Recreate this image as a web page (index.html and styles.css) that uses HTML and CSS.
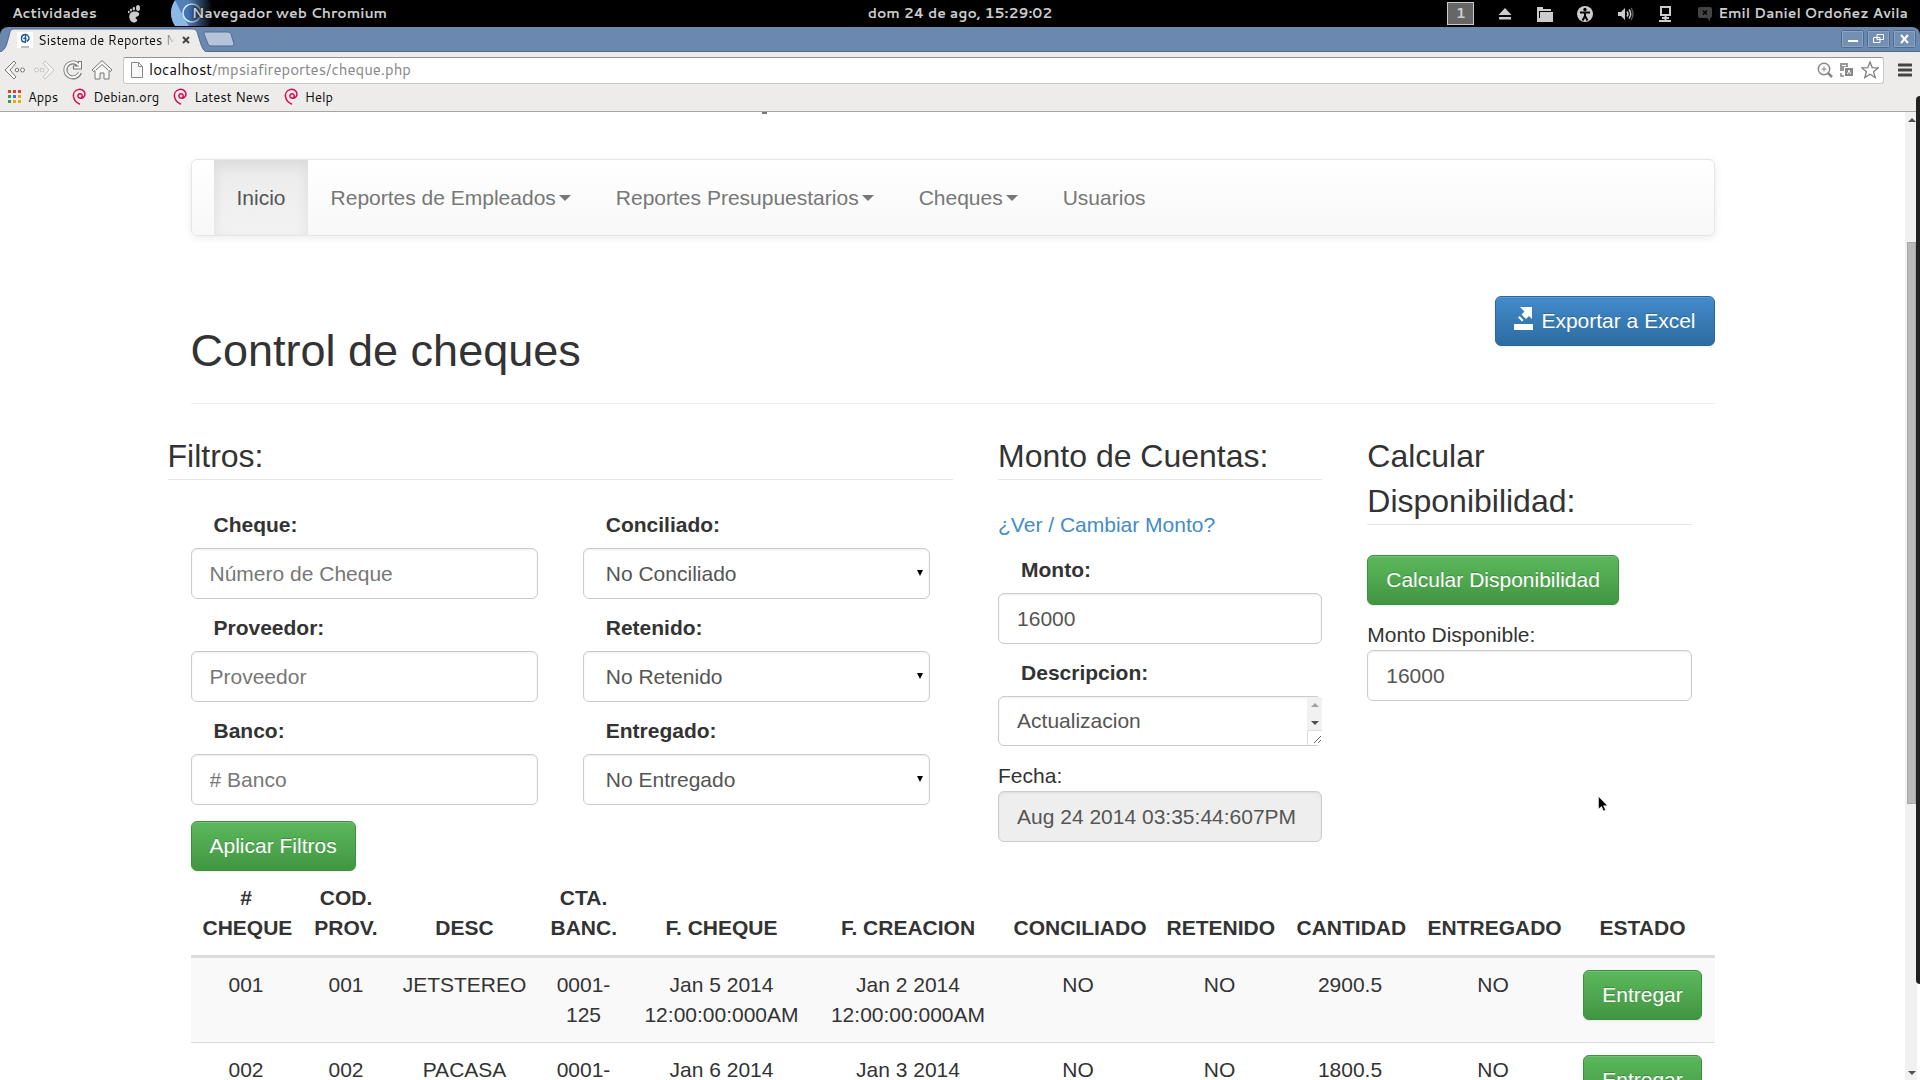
FILE: index.html
```html
<!DOCTYPE html>
<html lang="es">
<head>
<meta charset="utf-8">
<title>Sistema de Reportes</title>
<link rel="stylesheet" href="styles.css">
</head>
<body>
<svg class="defs" width="0" height="0" aria-hidden="true">
  <symbol id="debian" viewBox="0 0 16 18"><path d="M7.500 10.500C5.500 9.500 6 6.500 8.200 6c2.600-.4 3.600 2.600 1.900 4.300M8 10.600c3.500 1.200 6.200-1.600 5.800-4.900C13.300 2.300 9.500.7 6.200 1.700 2.500 2.800 1 6.300 1.700 9.700c.7 3.200 3 5.900 6.300 7.300" fill="none" stroke="#d70a53" stroke-width="1.600" stroke-linecap="round"/></symbol>
</svg>

<header class="shell">
  <div class="shell-left">
    <span>Actividades</span>
    <svg class="foot" width="14" height="18" viewBox="0 0 14 18" fill="#ccc"><path d="M6.500 6.500C10 6 13 7.500 12 10c-.6 1.500-3 1.500-3.500 3-.2 1 1.300.6 1.600 1.800C10.500 17 8 18 5.500 17.200 2 16 0 7.500 6.500 6.500z"/><ellipse cx="11" cy="3" rx="2" ry="2.900"/><ellipse cx="6.800" cy="3.700" rx="1.200" ry="1.900"/><ellipse cx="4" cy="5" rx="1" ry="1.600"/><ellipse cx="1.800" cy="7" rx=".9" ry="1.300"/></svg>
    <span class="app">
      <svg class="app-logo" width="42" height="26" viewBox="0 0 42 26"><defs><linearGradient id="fade"><stop offset=".4" stop-color="#fff"/><stop offset="1" stop-color="#000"/></linearGradient><mask id="m"><rect width="42" height="26" fill="url(#fade)"/></mask></defs><g mask="url(#m)"><circle cx="21" cy="13" r="21" fill="#4f80b8"/><path d="M4 0L14 20 18 26H4Q-4 13 4 0z" fill="#8cb8e6"/><circle cx="21" cy="13" r="9" fill="#3f73b5" stroke="#dce9f7" stroke-width="1.500"/></g></svg>
      <span>Navegador web Chromium</span>
    </span>
  </div>
  <time>dom 24 de ago, 15:29:02</time>
  <div class="shell-right">
    <span class="workspace">1</span>
    <svg width="40" height="20" viewBox="0 0 40 20" fill="#ccc"><path d="M20 4l6.500 7h-13zM14 13h12v2.500H14z"/></svg>
    <svg width="40" height="20" viewBox="0 0 40 20" fill="#ccc"><path d="M12 3h6v2h8v2H14v7h-2zM15 8h13v10H12v-4h3z"/></svg>
    <svg width="40" height="20" viewBox="0 0 40 20"><circle cx="20" cy="10" r="8" fill="#ccc"/><circle cx="20" cy="5.500" r="1.700"/><path d="M15 8.500h10M20 8v4l-2.500 4.500M20 12l2.500 4.500" fill="none" stroke="#000" stroke-width="2"/></svg>
    <svg width="40" height="20" viewBox="0 0 40 20" fill="none"><path d="M13 8h3l4-4v12l-4-4h-3z" fill="#ccc"/><path d="M22 7.500q2 2.500 0 5M24 5.500q3.500 4.500 0 9" stroke="#ccc" stroke-width="1.500"/><path d="M26 4q4 6 0 12" stroke="#555" stroke-width="1.500"/></svg>
    <svg width="40" height="20" viewBox="0 0 40 20" fill="none" stroke="#ccc" stroke-width="2"><path d="M16 3h9v8h-9zM20.500 11v6M14 17h12M17 14h7"/></svg>
    <svg class="chat" width="14" height="14" viewBox="0 0 14 14"><path d="M2 0h10q2 0 2 2v7q0 2-2 2v3l-3-3H2q-2 0-2-2V2q0-2 2-2z" fill="#444"/><path d="M5 3.500l4 4M9 3.500l-4 4" stroke="#000" stroke-width="1.500"/></svg>
    <span>Emil Daniel Ordoñez Avila</span>
  </div>
</header>

<div class="tabstrip">
  <div class="tab">
    <svg class="tab-shape" width="212" height="24" viewBox="0 0 212 24"><path d="M0 24C6 22 7 15 9 8 10 3 11 1 14 1H192c4 0 5 2 6 6 3 9 4 16 9 17z" fill="#edecea"/><path d="M0 24C6 22 7 15 9 8 10 3 11 1 14 1H192c4 0 5 2 6 6 3 9 4 16 9 17" fill="none" stroke="#4f6a8f"/></svg>
    <svg class="favicon" width="16" height="16" viewBox="0 0 16 16"><path fill="#fff" d="M0 0h16v16H0z"/><path d="M8.500 2v9M10 9.500q3-2.500 1.500-5Q10 2 7.500 2.500 4.500 3 4.500 6.500T7.500 10Q9 10 8.800 6.500 7 5.500 6.500 7" fill="none" stroke="#1f5a92" stroke-width="1.400"/><path d="M4 15h8" stroke="#bbb" stroke-width="2"/></svg>
    <span class="tab-title">Sistema de Reportes M</span>
    <svg class="tab-close" width="8" height="8" viewBox="0 0 8 8"><path d="M1 1l6 6M7 1L1 7" stroke="#444" stroke-width="2"/></svg>
  </div>
  <svg class="newtab" width="32" height="16" viewBox="0 0 32 16"><path d="M2 1h23q2 0 3 2l3 10q0 2-2 2H8q-2 0-3-2L1 3q0-2 1-2z" fill="#b5c4d8" stroke="#516d93"/></svg>
  <div class="winbtns">
    <svg width="23" height="18" viewBox="0 0 23 18"><rect x=".5" y=".5" width="22" height="17" rx="2" fill="#7390b4" stroke="#50698c"/><rect x="1.500" y="1.500" width="20" height="15" fill="none" stroke="#8ba3c2"/><path d="M7 11h10" stroke="#fff" stroke-width="2"/></svg>
    <svg width="23" height="18" viewBox="0 0 23 18"><rect x=".5" y=".5" width="22" height="17" rx="2" fill="#7390b4" stroke="#50698c"/><rect x="1.500" y="1.500" width="20" height="15" fill="none" stroke="#8ba3c2"/><path d="M10 4.500h6.500v5H10zM6.500 7.500h6.500v5H6.500z" fill="#7390b4" stroke="#fff"/></svg>
    <svg width="23" height="18" viewBox="0 0 23 18"><rect x=".5" y=".5" width="22" height="17" rx="2" fill="#7390b4" stroke="#50698c"/><rect x="1.500" y="1.500" width="20" height="15" fill="none" stroke="#8ba3c2"/><path d="M8 5l7 8M15 5l-7 8" stroke="#fff" stroke-width="2"/></svg>
  </div>
</div>

<div class="toolbar">
  <svg width="22" height="22" viewBox="0 0 22 22" fill="#f8f8f7" stroke="#777"><path d="M10 2l2 2-6 7 6 7-2 2-9-9z"/><circle cx="13" cy="11" r="1.800"/><circle cx="18.500" cy="11" r="2"/></svg>
  <svg width="22" height="22" viewBox="0 0 22 22" fill="#f4f4f3" stroke="#c4c4c2"><path d="M12 2l-2 2 6 7-6 7 2 2 9-9z"/><circle cx="9" cy="11" r="1.800"/><circle cx="3.500" cy="11" r="2"/></svg>
  <svg width="22" height="22" viewBox="0 0 22 22" fill="none"><path d="M17 6.500a7.500 7.500 0 1 0 1 7M18 2v6.500h-7" stroke="#777" stroke-width="4"/><path d="M17 6.500a7.500 7.500 0 1 0 1 6.500M18 3v5.500h-6" stroke="#f8f8f7" stroke-width="2"/></svg>
  <svg width="22" height="22" viewBox="0 0 22 22" fill="#f8f8f7" stroke="#777"><path d="M11 1.500L1 11l1.500 1.500L4 11.500V20h5v-6h4v6h5v-8.500l1.500 1L21 11z"/><path d="M5 11l6-5.500 6 5.500" fill="none"/></svg>
  <div class="urlbox">
    <svg width="12" height="16" viewBox="0 0 12 16"><path d="M.5.500h7l4 4v11H.5zM7.500.500v4h4" fill="#f7f7f7" stroke="#888"/></svg>
    <span class="url">localhost<span>/mpsiafireportes/cheque.php</span></span>
    <svg width="16" height="16" viewBox="0 0 16 16" fill="none" stroke="#888"><circle cx="7" cy="7" r="5.700" stroke-width="1.500"/><path d="M4.500 7h5M7 4.500v5"/><path d="M11 11l4 4" stroke-width="2.500"/></svg>
    <svg width="16" height="16" viewBox="0 0 16 16"><path d="M1 1h8v4H5v4H1z" fill="#999"/><path d="M6 6h8v8H6z" fill="#888"/><path d="M8.500 12L10 8l1.500 4M3 3.500h4" fill="none" stroke="#fff"/><path d="M2 11v3h3" fill="none" stroke="#888" stroke-width="1.500"/></svg>
    <svg width="18" height="18" viewBox="0 0 18 18"><path d="M9 1l2.200 5.600 6 .3-4.600 3.800 1.600 5.900L9 13.300l-5.200 3.300 1.600-5.900L.8 6.900l6-.3z" fill="#fff" stroke="#808080" stroke-width="1.300"/></svg>
  </div>
  <svg class="menu" width="14" height="14" viewBox="0 0 14 14"><path d="M1 2h12M1 7h12M1 12h12" stroke="#444" stroke-width="3" stroke-linecap="round"/></svg>
</div>

<nav class="bookmarks">
  <a href="#"><svg width="14" height="14" viewBox="0 0 14 14"><path d="M0 0h3v3H0zM5 0h3v3H5zM10 0h3v3h-3z" fill="#e53935"/><path d="M0 5h3v3H0zM0 10h3v3H0z" fill="#2e9e5b"/><path d="M5 5h3v3H5z" fill="#2f7de1"/><path d="M10 5h3v3h-3zM5 10h3v3H5zM10 10h3v3h-3z" fill="#f2a600"/></svg>Apps</a>
  <a href="#"><svg width="15" height="17"><use href="#debian"/></svg>Debian.org</a>
  <a href="#"><svg width="15" height="17"><use href="#debian"/></svg>Latest News</a>
  <a href="#"><svg width="15" height="17"><use href="#debian"/></svg>Help</a>
</nav>

<div class="viewport">
  <main class="page">
    <span class="banner-tail"></span>
    <div class="container">
      <nav class="navbar">
        <a class="active" href="#">Inicio</a>
        <a href="#">Reportes de Empleados<i class="caret"></i></a>
        <a href="#">Reportes Presupuestarios<i class="caret"></i></a>
        <a href="#">Cheques<i class="caret"></i></a>
        <a href="#">Usuarios</a>
      </nav>

      <div class="page-header">
        <h2>Control de cheques</h2>
        <button class="btn btn-primary" type="button"><svg width="21" height="24" viewBox="0 0 21 24" fill="#fff"><path d="M6 1h12v12l-3-3-3 3-4.500-4.500 3-3zM5.500 10l4 4-1.500 1.500-4-4zM0 18h19v6H0z"/></svg>Exportar a Excel</button>
      </div>

      <div class="panels">
        <section>
          <h3>Filtros:</h3>
          <form class="filters">
            <div class="field"><label for="cheque">Cheque:</label><input id="cheque" type="text" placeholder="Número de Cheque"></div>
            <div class="field"><label for="conciliado">Conciliado:</label><div class="select"><select id="conciliado"><option>No Conciliado</option></select></div></div>
            <div class="field"><label for="proveedor">Proveedor:</label><input id="proveedor" type="text" placeholder="Proveedor"></div>
            <div class="field"><label for="retenido">Retenido:</label><div class="select"><select id="retenido"><option>No Retenido</option></select></div></div>
            <div class="field"><label for="banco">Banco:</label><input id="banco" type="text" placeholder="# Banco"></div>
            <div class="field"><label for="entregado">Entregado:</label><div class="select"><select id="entregado"><option>No Entregado</option></select></div></div>
            <button class="btn btn-success" type="button">Aplicar Filtros</button>
          </form>
        </section>
        <section>
          <h3>Monto de Cuentas:</h3>
          <a class="link" href="#">¿Ver / Cambiar Monto?</a>
          <div class="stack">
            <div class="field"><label for="monto">Monto:</label><input id="monto" type="text" value="16000"></div>
            <div class="field"><label for="descripcion">Descripcion:</label>
              <div class="area"><textarea id="descripcion" rows="1">Actualizacion</textarea>
                <svg width="15" height="48" viewBox="0 0 15 48"><path fill="#f1f1f1" d="M0 0h15v33H0z"/><path fill="#fff" d="M0 33h15v15H0z"/><path d="M.5 48V33.500H15" fill="none" stroke="#ddd"/><path d="M4 10l4-4 4 4z" fill="#a3a3a3"/><path d="M4 24h8l-4 4z" fill="#505050"/><path d="M7 46l7-7M11 46l3-3" stroke="#666"/></svg>
              </div>
            </div>
          </div>
          <div class="plain"><label for="fecha">Fecha:</label><input id="fecha" type="text" value="Aug 24 2014 03:35:44:607PM" readonly></div>
        </section>
        <section>
          <h3>Calcular Disponibilidad:</h3>
          <button class="btn btn-success" type="button">Calcular Disponibilidad</button>
          <div class="plain"><label for="disponible">Monto Disponible:</label><input id="disponible" type="text" value="16000"></div>
        </section>
      </div>

      <table>
        <colgroup><col class="c-cheque"><col class="c-prov"><col class="c-desc"><col class="c-cta"><col class="c-fecha"><col class="c-creacion"><col class="c-conc"><col class="c-ret"><col class="c-cant"><col class="c-ent"><col class="c-estado"></colgroup>
        <thead><tr><th># CHEQUE</th><th>COD. PROV.</th><th>DESC</th><th>CTA. BANC.</th><th>F. CHEQUE</th><th>F. CREACION</th><th>CONCILIADO</th><th>RETENIDO</th><th>CANTIDAD</th><th>ENTREGADO</th><th>ESTADO</th></tr></thead>
        <tbody>
          <tr><td>001</td><td>001</td><td>JETSTEREO</td><td>0001-125</td><td>Jan 5 2014 12:00:00:000AM</td><td>Jan 2 2014 12:00:00:000AM</td><td>NO</td><td>NO</td><td>2900.5</td><td>NO</td><td><button class="btn btn-success" type="button">Entregar</button></td></tr>
          <tr><td>002</td><td>002</td><td>PACASA</td><td>0001-125</td><td>Jan 6 2014 12:00:00:000AM</td><td>Jan 3 2014 12:00:00:000AM</td><td>NO</td><td>NO</td><td>1800.5</td><td>NO</td><td><button class="btn btn-success" type="button">Entregar</button></td></tr>
        </tbody>
      </table>
    </div>
  </main>
  <div class="scrollbar">
    <svg width="12" height="16" viewBox="0 0 12 16"><path d="M3 10l4-4 4 4z" fill="#505050"/></svg>
    <div class="track"><div class="thumb"></div></div>
    <svg width="12" height="16" viewBox="0 0 12 16"><path d="M3 7h8l-4 4z" fill="#505050"/></svg>
  </div>
</div>

<div class="edge"></div>
<svg class="pointer" width="12" height="18" viewBox="0 0 12 18"><path d="M.5.500v12.500l3-2.500 2 4.500 2-1-2-4.300h4z" fill="#000" stroke="#fff" stroke-width=".5"/></svg>
</body>
</html>
```
FILE: styles.css
```css
* { box-sizing: border-box; }

body {
  margin: 0;
  height: 100vh;
  overflow: hidden;
  display: flex;
  flex-direction: column;
  background: #000;
  color: #333;
  font: 21px/30px "Liberation Sans", Arial, sans-serif;
}

svg { display: block; flex: none; }
.defs { position: absolute; }
a { color: inherit; text-decoration: none; }

/* Desktop bar */
.shell {
  flex: none;
  height: 27px;
  display: flex;
  align-items: center;
  color: #ccc;
  font: 600 14px/27px Cantarell, "Noto Sans", sans-serif;
  white-space: nowrap;
}
.shell-left, .shell-right { flex: 1; display: flex; align-items: center; }
.shell-left { padding-left: 12px; }
.shell-right { justify-content: flex-end; padding-right: 12px; }
.foot { margin: 0 30px; }
.app { position: relative; padding-left: 21px; }
.app-logo { position: absolute; left: 0; top: 0; }
.app span { position: relative; text-shadow: 0 0 2px #000; }
.workspace {
  width: 27px;
  height: 23px;
  margin-right: 11px;
  border: 1px solid #ccc;
  background: #666;
  line-height: 21px;
  text-align: center;
}
.chat { margin: 0 6px 0 13px; }

/* Browser frame */
.tabstrip {
  flex: none;
  height: 25px;
  display: flex;
  align-items: center;
  padding-right: 4px;
  background: #6b89af;
  border-bottom: 1px solid #4f6a8f;
  border-radius: 8px 8px 0 0;
  font: 13px/20px Cantarell, "Noto Sans", sans-serif;
  color: #111;
}
.tab {
  position: relative;
  width: 203px;
  display: flex;
  align-items: center;
  height: 24px;
  padding: 2px 0 0 17px;
}
.tab-shape { position: absolute; left: 0; top: 1px; }
.favicon, .tab-title, .tab-close { position: relative; }
.tab-title {
  width: 137px;
  margin: 0 7px 0 5px;
  overflow: hidden;
  white-space: nowrap;
  -webkit-mask-image: linear-gradient(90deg, #000 88%, transparent);
  mask-image: linear-gradient(90deg, #000 88%, transparent);
}
.winbtns { margin-left: auto; display: flex; gap: 3px; }

.toolbar {
  flex: none;
  height: 34px;
  display: flex;
  align-items: center;
  gap: 7px;
  padding: 2px 8px 0 4px;
  background: #edecea;
}
.urlbox {
  flex: 1;
  height: 27px;
  display: flex;
  align-items: center;
  gap: 6px;
  margin-left: 3px;
  padding: 0 4px 0 7px;
  background: #fff;
  border: 1px solid #c8c8c6;
  border-top-color: #949390;
  border-radius: 3px;
  font: 15px/20px Cantarell, "Noto Sans", sans-serif;
  color: #111;
}
.url { flex: 1; }
.url span { color: #888; }
.menu { margin-left: 7px; }

.bookmarks {
  flex: none;
  height: 26px;
  display: flex;
  align-items: center;
  gap: 14px;
  padding: 0 0 4px 8px;
  background: #edecea;
  border-bottom: 1px solid #a5a5a3;
  font: 13px/20px Cantarell, "Noto Sans", sans-serif;
  color: #111;
}
.bookmarks a { display: flex; align-items: center; gap: 6px; }

/* Page area */
.viewport {
  flex: 1;
  min-height: 0;
  display: flex;
  background: #fff;
  padding-right: 3px;
}
.page {
  position: relative;
  flex: 1;
  min-width: 0;
  overflow: hidden;
  padding-top: 47px;
}
.container { width: 80%; margin: 0 auto; }
.banner-tail {
  position: absolute;
  left: 40%;
  top: 0;
  width: 5px;
  height: 2px;
  background: #777;
}

.navbar {
  display: flex;
  padding-left: 22px;
  border: 1px solid #e5e5e5;
  border-radius: 6px;
  background: linear-gradient(#fff, #f8f8f8);
  box-shadow: 0 2px 8px rgba(0, 0, 0, .08);
  color: #777;
}
.navbar a { display: flex; align-items: center; padding: 23px 22px 22px 23px; }
.navbar .active {
  color: #555;
  background: linear-gradient(#ebebeb, #f3f3f3);
  box-shadow: inset 0 5px 14px rgba(0, 0, 0, .08);
}
.caret {
  margin-left: 3px;
  border: 6px solid transparent;
  border-top-color: #777;
  border-bottom: 0;
}

.page-header {
  display: flex;
  justify-content: space-between;
  align-items: flex-start;
  margin: 60px 0 30px;
  border-bottom: 1px solid #eee;
}
h2, h3 { margin: 0; font-weight: 400; }
h2 { font-size: 45px; line-height: 50px; padding: 30px 0 27px; }
h3 {
  font-size: 32px;
  line-height: 45px;
  border-bottom: 1px solid #e5e5e5;
  margin-bottom: 30px;
}

.btn {
  height: 50px;
  padding: 0 18px;
  border: 1px solid;
  border-radius: 6px;
  color: #fff;
  font: inherit;
  white-space: nowrap;
  text-shadow: 0 -1px 0 rgba(0, 0, 0, .2);
  box-shadow: inset 0 1px 0 rgba(255, 255, 255, .15), 0 1px 2px rgba(0, 0, 0, .08);
}
.btn-success { background: linear-gradient(#5cb85c, #419641); border-color: #3e8f3e; }
.btn-primary {
  display: flex;
  align-items: center;
  gap: 6px;
  background: linear-gradient(#428bca, #2d6ca2);
  border-color: #2b669a;
}
.btn-primary svg { margin-bottom: 6px; }

.panels {
  display: grid;
  grid-template-columns: 785fr 324fr 324fr;
  gap: 45px;
  margin: 0 -22px 0 -23px;
  padding-right: 45px;
  align-items: start;
}
.filters {
  display: grid;
  grid-template-columns: 1fr 1fr;
  gap: 14px 45px;
  padding: 0 23px;
}
.filters .btn { justify-self: start; margin-top: 2px; }
.field, .stack { display: flex; flex-direction: column; }
.field { gap: 8px; }
.field label { padding-left: 23px; font-weight: 700; }
.link { display: block; margin-bottom: 15px; color: #428bca; }
.stack { gap: 14px; }
.plain { margin-top: 15px; }
.plain label { display: block; }

input, select, textarea {
  display: block;
  width: 100%;
  height: 51px;
  margin: 0;
  padding: 0 18px;
  border: 1px solid #ccc;
  border-radius: 6px;
  background: #fff;
  color: #555;
  font: inherit;
  box-shadow: inset 0 1px 2px rgba(0, 0, 0, .08);
}
input::placeholder { color: #777; opacity: 1; }
input[readonly] { background: #eee; }
.select, .area { position: relative; }
select { appearance: none; padding-left: 22px; }
.select::after {
  content: "";
  position: absolute;
  right: 7px;
  top: 22px;
  border: 3px solid transparent;
  border-top: 6px solid #000;
  border-bottom: 0;
}
textarea { height: 50px; padding-top: 9px; resize: none; overflow: hidden; }
.area svg { position: absolute; right: 0; top: 1px; }

table { width: 100%; table-layout: fixed; border-collapse: collapse; text-align: center; }
th, td { padding: 12px; }
th { vertical-align: bottom; border-bottom: 3px solid #ddd; }
td { vertical-align: top; border-bottom: 1px solid #ddd; }
td .btn { display: block; margin: 0 auto; }
tbody tr:nth-child(odd) { background: #f9f9f9; }
.c-cheque { width: 111px; }
.c-prov { width: 89px; }
.c-desc { width: 148px; }
.c-cta { width: 90px; }
.c-fecha { width: 186px; }
.c-creacion { width: 187px; }
.c-conc { width: 153px; }
.c-ret { width: 130px; }
.c-cant { width: 131px; }
.c-ent { width: 155px; }
.c-estado { width: 144px; }

.scrollbar {
  width: 12px;
  display: flex;
  flex-direction: column;
  background: #f1f1f1;
}
.track { flex: 1; display: flex; flex-direction: column; padding: 0 1px 0 2px; }
.track::before { content: ""; flex: 114; }
.track::after { content: ""; flex: 261; }
.thumb { flex: 561; background: #bababa; border: 1px solid #a8a8a8; }

.edge {
  position: absolute;
  right: 0;
  top: 96px;
  width: 4px;
  height: 888px;
  border-radius: 6px 0 0 6px;
  background: #222;
}
.pointer { position: absolute; left: 1598px; top: 796px; }
```
